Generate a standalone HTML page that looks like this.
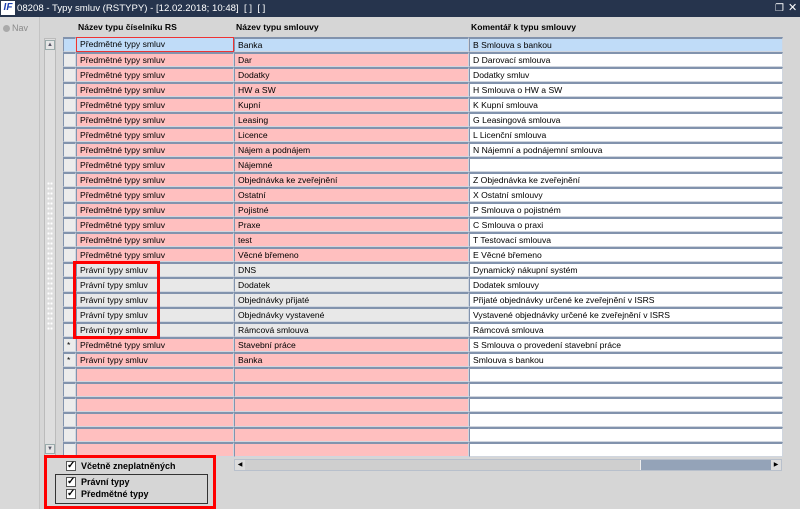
<!DOCTYPE html>
<html><head><meta charset="utf-8"><style>
*{box-sizing:border-box;margin:0;padding:0}
body{width:800px;height:509px;overflow:hidden;background:#d6d6d6;font-family:"Liberation Sans",sans-serif;font-size:8.6px;color:#000;position:relative}
.tb{position:absolute;left:0;top:0;width:800px;height:17px;background:#26344d;color:#fff;font-size:9.6px;line-height:17px}
.logo{position:absolute;left:1px;top:1px;width:14px;height:14px;background:#fff;color:#1b3fb0;font:bold italic 10px/14px "Liberation Sans",sans-serif;text-align:center}
.tt{position:absolute;left:17px;top:0}
.nav{position:absolute;left:0;top:17px;width:40px;height:492px;background:#d9d9d9;border-right:1px solid #c4c4c4}
.nav span{position:absolute;left:3px;top:6px;color:#8a8a8a;font-size:9px}
.nav i{display:inline-block;width:7px;height:7px;border-radius:50%;background:#aaa;margin-right:2px;vertical-align:-1px}
.vs{position:absolute;left:44px;top:38px;width:12px;height:418px;background:#dedede;border:1px solid #bbb}
.ab{position:absolute;left:0;width:10px;height:10px;background:#e6e6e6;border:1px solid #9aa;font-size:6px;line-height:8px;text-align:center;color:#556}
.grip{position:absolute;left:2px;top:142px;width:6px;height:150px;background-image:radial-gradient(circle,#fff 1px,transparent 1.2px);background-size:3px 5px}
.h{position:absolute;top:22px;font-weight:bold;font-size:8.6px}
.r{position:absolute;left:63px;height:15px;width:720px}
.c{position:absolute;top:0;height:15px;border-top:2px solid #8293ad;border-left:1px solid #8293ad;border-bottom:1px solid #d0d6df;border-right:1px solid #d0d6df;padding-left:3px;line-height:13px;white-space:nowrap;overflow:hidden}
.i{left:0;width:13px;background:#ececec}
.a{left:13px;width:158px}
.b{left:171px;width:235px}
.d{left:406px;width:314px;background:#fff}
.p{background:#ffbfbf}.g{background:#e8e8e8}.s{background:#c0dcf8}
.hs{position:absolute;left:234px;top:459px;width:548px;height:12px;background:#94a3b8;border:1px solid #b8c0cc}
.hs .th{position:absolute;left:10px;top:0;width:396px;height:10px;background:#cfcfcf;border-right:1px solid #eee}
.red{position:absolute;border:3px solid #f00}
.cb{position:absolute;width:10px;height:10px;background:#fff;border:1px solid #555;font-size:10px;line-height:8px;text-align:center;font-weight:bold}
.lb{position:absolute;font-weight:bold;font-size:9px}
</style></head><body>
<div class="tb"><div class="logo">IF</div><div class="tt">08208 - Typy smluv (RSTYPY) - [12.02.2018; 10:48]&nbsp; [ ]&nbsp; [ ]</div>
<div style="position:absolute;left:775px;top:0;font-size:10px">&#x2750;</div><div style="position:absolute;left:788px;top:0;font-size:11px">&#x2715;</div></div>
<div class="nav"><span><i></i>Nav</span></div>
<div class="vs"><div class="ab" style="top:1px">&#9650;</div><div class="grip"></div><div class="ab" style="bottom:1px">&#9660;</div></div>
<div class="h" style="left:78px">Název typu číselníku RS</div>
<div class="h" style="left:236px">Název typu smlouvy</div>
<div class="h" style="left:471px">Komentář k typu smlouvy</div>

<div class="r" style="top:37px"><div class="c i s"></div><div class="c a s" style="border:1px solid #e33">Předmětné typy smluv</div><div class="c b s">Banka</div><div class="c d s">B Smlouva s bankou</div></div>
<div class="r" style="top:52px"><div class="c i"></div><div class="c a p">Předmětné typy smluv</div><div class="c b p">Dar</div><div class="c d">D Darovací smlouva</div></div>
<div class="r" style="top:67px"><div class="c i"></div><div class="c a p">Předmětné typy smluv</div><div class="c b p">Dodatky</div><div class="c d">Dodatky smluv</div></div>
<div class="r" style="top:82px"><div class="c i"></div><div class="c a p">Předmětné typy smluv</div><div class="c b p">HW a SW</div><div class="c d">H Smlouva o HW a SW</div></div>
<div class="r" style="top:97px"><div class="c i"></div><div class="c a p">Předmětné typy smluv</div><div class="c b p">Kupní</div><div class="c d">K Kupní smlouva</div></div>
<div class="r" style="top:112px"><div class="c i"></div><div class="c a p">Předmětné typy smluv</div><div class="c b p">Leasing</div><div class="c d">G Leasingová smlouva</div></div>
<div class="r" style="top:127px"><div class="c i"></div><div class="c a p">Předmětné typy smluv</div><div class="c b p">Licence</div><div class="c d">L Licenční smlouva</div></div>
<div class="r" style="top:142px"><div class="c i"></div><div class="c a p">Předmětné typy smluv</div><div class="c b p">Nájem a podnájem</div><div class="c d">N Nájemní a podnájemní smlouva</div></div>
<div class="r" style="top:157px"><div class="c i"></div><div class="c a p">Předmětné typy smluv</div><div class="c b p">Nájemné</div><div class="c d"></div></div>
<div class="r" style="top:172px"><div class="c i"></div><div class="c a p">Předmětné typy smluv</div><div class="c b p">Objednávka ke zveřejnění</div><div class="c d">Z Objednávka ke zveřejnění</div></div>
<div class="r" style="top:187px"><div class="c i"></div><div class="c a p">Předmětné typy smluv</div><div class="c b p">Ostatní</div><div class="c d">X Ostatní smlouvy</div></div>
<div class="r" style="top:202px"><div class="c i"></div><div class="c a p">Předmětné typy smluv</div><div class="c b p">Pojistné</div><div class="c d">P Smlouva o pojistném</div></div>
<div class="r" style="top:217px"><div class="c i"></div><div class="c a p">Předmětné typy smluv</div><div class="c b p">Praxe</div><div class="c d">C Smlouva o praxi</div></div>
<div class="r" style="top:232px"><div class="c i"></div><div class="c a p">Předmětné typy smluv</div><div class="c b p">test</div><div class="c d">T Testovací smlouva</div></div>
<div class="r" style="top:247px"><div class="c i"></div><div class="c a p">Předmětné typy smluv</div><div class="c b p">Věcné břemeno</div><div class="c d">E Věcné břemeno</div></div>
<div class="r" style="top:262px"><div class="c i"></div><div class="c a g">Právní typy smluv</div><div class="c b g">DNS</div><div class="c d">Dynamický nákupní systém</div></div>
<div class="r" style="top:277px"><div class="c i"></div><div class="c a g">Právní typy smluv</div><div class="c b g">Dodatek</div><div class="c d">Dodatek smlouvy</div></div>
<div class="r" style="top:292px"><div class="c i"></div><div class="c a g">Právní typy smluv</div><div class="c b g">Objednávky přijaté</div><div class="c d">Přijaté objednávky určené ke zveřejnění v ISRS</div></div>
<div class="r" style="top:307px"><div class="c i"></div><div class="c a g">Právní typy smluv</div><div class="c b g">Objednávky vystavené</div><div class="c d">Vystavené objednávky určené ke zveřejnění v ISRS</div></div>
<div class="r" style="top:322px"><div class="c i"></div><div class="c a g">Právní typy smluv</div><div class="c b g">Rámcová smlouva</div><div class="c d">Rámcová smlouva</div></div>
<div class="r" style="top:337px"><div class="c i">*</div><div class="c a p">Předmětné typy smluv</div><div class="c b p">Stavební práce</div><div class="c d">S Smlouva o provedení stavební práce</div></div>
<div class="r" style="top:352px"><div class="c i">*</div><div class="c a p">Právní typy smluv</div><div class="c b p">Banka</div><div class="c d">Smlouva s bankou</div></div>
<div class="r" style="top:367px"><div class="c i"></div><div class="c a p"></div><div class="c b p"></div><div class="c d"></div></div>
<div class="r" style="top:382px"><div class="c i"></div><div class="c a p"></div><div class="c b p"></div><div class="c d"></div></div>
<div class="r" style="top:397px"><div class="c i"></div><div class="c a p"></div><div class="c b p"></div><div class="c d"></div></div>
<div class="r" style="top:412px"><div class="c i"></div><div class="c a p"></div><div class="c b p"></div><div class="c d"></div></div>
<div class="r" style="top:427px"><div class="c i"></div><div class="c a p"></div><div class="c b p"></div><div class="c d"></div></div>
<div class="r" style="top:442px"><div class="c i"></div><div class="c a p"></div><div class="c b p"></div><div class="c d"></div></div>

<div class="red" style="left:73px;top:261px;width:87px;height:78px"></div>
<div class="hs"><div class="th"></div><div style="position:absolute;left:0;top:0;width:10px;height:10px;background:#ddd;font-size:6px;line-height:10px;text-align:center">&#9664;</div><div style="position:absolute;right:0;top:0;width:10px;height:10px;background:#ddd;font-size:6px;line-height:10px;text-align:center">&#9654;</div></div>

<div class="red" style="left:44px;top:455px;width:172px;height:54px"></div>
<div class="cb" style="left:66px;top:461px">&#10003;</div><div class="lb" style="left:81px;top:461px">Včetně zneplatněných</div>
<div style="position:absolute;left:55px;top:474px;width:153px;height:30px;border:1px solid #333"></div>
<div class="cb" style="left:66px;top:477px">&#10003;</div><div class="lb" style="left:81px;top:477px">Právní typy</div>
<div class="cb" style="left:66px;top:489px">&#10003;</div><div class="lb" style="left:81px;top:489px">Předmětné typy</div>
</body></html>
